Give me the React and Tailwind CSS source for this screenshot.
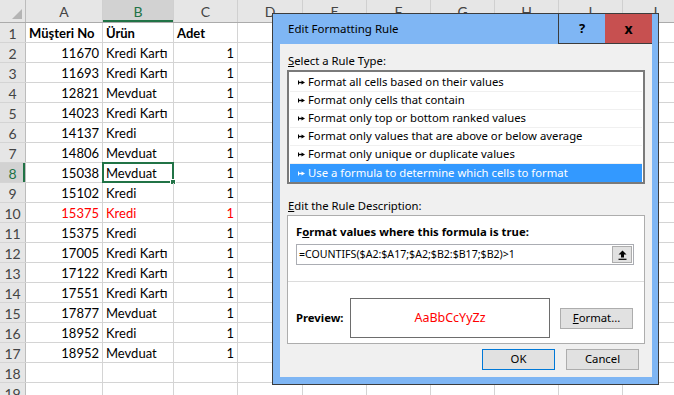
import React from "react";

const colWidths = ["w-[77px]", "w-[71px]", "w-[64px]", "w-[65px]", "w-[64px]", "w-[64px]", "w-[64px]", "w-[64px]", "w-[64px]", "w-[64px]"];
const letters = ["A", "B", "C", "D", "E", "F", "G", "H", "I", "J"];

const data = [
  [11670, "Kredi Kartı", 1],
  [11693, "Kredi Kartı", 1],
  [12821, "Mevduat", 1],
  [14023, "Kredi Kartı", 1],
  [14137, "Kredi", 1],
  [14806, "Mevduat", 1],
  [15038, "Mevduat", 1],
  [15102, "Kredi", 1],
  [15375, "Kredi", 1],
  [15375, "Kredi", 1],
  [17005, "Kredi Kartı", 1],
  [17122, "Kredi Kartı", 1],
  [17551, "Kredi Kartı", 1],
  [17877, "Mevduat", 1],
  [18952, "Kredi", 1],
  [18952, "Mevduat", 1],
];

const ruleTypes = [
  "Format all cells based on their values",
  "Format only cells that contain",
  "Format only top or bottom ranked values",
  "Format only values that are above or below average",
  "Format only unique or duplicate values",
  "Use a formula to determine which cells to format",
];

function RowHeader({ n, selected }) {
  return (
    <div
      className={
        "w-[26px] shrink-0 flex items-center justify-center pt-[2px] border-r border-[#bcbcbc] " +
        (selected
          ? "bg-[#d2d2d2] text-[#217346] shadow-[inset_-2px_0_0_#217346]"
          : "bg-[#e6e6e6] text-[#444]")
      }
    >
      {n}
    </div>
  );
}

function Cell({ width, children, align = "left", bold, red, selected }) {
  return (
    <div
      className={
        width +
        " shrink-0 relative flex items-center pt-[2px] px-[3px] border-r border-[#d4d4d4] whitespace-nowrap " +
        (align === "right" ? "justify-end " : "") +
        (bold ? "font-bold " : "") +
        (red ? "text-[#ff0000]" : "text-black")
      }
    >
      {children}
      {selected && (
        <div className="absolute -left-px -top-px -right-px -bottom-px border-2 border-[#217346]">
          <div className="absolute -right-[4px] -bottom-[4px] w-[6px] h-[6px] bg-[#217346] border border-white" />
        </div>
      )}
    </div>
  );
}

function Sheet() {
  const rows = [["Müşteri No", "Ürün", "Adet"], ...data, null, null];
  return (
    <div className="font-['Lato',sans-serif]">
      <div className="flex h-[23px] border-b border-[#ababab] bg-[#e6e6e6] text-[#444] text-[14px]">
        <div className="w-[26px] shrink-0 border-r border-[#bcbcbc] flex items-end justify-end p-[3px]">
          <svg width="10" height="10" viewBox="0 0 10 10">
            <path d="M10 0 L10 10 L0 10 Z" fill="#b4b4b4" />
          </svg>
        </div>
        {letters.map((l, i) => (
          <div
            key={l}
            className={
              colWidths[i] +
              " shrink-0 flex items-center justify-center pt-[1px] border-r border-[#d0d0d0] " +
              (l === "B" ? "bg-[#d2d2d2] text-[#217346] shadow-[inset_0_-2px_0_#217346]" : "")
            }
          >
            {l}
          </div>
        ))}
      </div>
      {rows.map((r, idx) => {
        const n = idx + 1;
        const red = n === 10;
        return (
          <div key={n} className="flex h-5 border-b border-[#d4d4d4] text-[14px]">
            <RowHeader n={n} selected={n === 8} />
            <div className="flex text-[13px]">
              <Cell width={colWidths[0]} align={n === 1 ? "left" : "right"} bold={n === 1} red={red}>
                {r ? r[0] : ""}
              </Cell>
              <Cell width={colWidths[1]} bold={n === 1} red={red} selected={n === 8}>
                {r ? r[1] : ""}
              </Cell>
              <Cell width={colWidths[2]} align={n === 1 ? "left" : "right"} bold={n === 1} red={red}>
                {r ? r[2] : ""}
              </Cell>
              {colWidths.slice(3).map((w, i) => (
                <Cell key={i} width={w} />
              ))}
            </div>
          </div>
        );
      })}
    </div>
  );
}

function RuleArrow({ white }) {
  const c = white ? "#ffffff" : "#000000";
  return (
    <svg width="7" height="5" viewBox="0 0 7 5" className="shrink-0">
      <path d="M0.5 0.5 V4.5" stroke={c} strokeWidth="1" />
      <path d="M0.5 2.5 H4" stroke={c} strokeWidth="1.4" />
      <path d="M3.5 0.5 L7 2.5 L3.5 4.5 Z" fill={c} />
    </svg>
  );
}

function Button({ children, primary, className = "" }) {
  return (
    <div
      className={
        "w-[73px] h-[21px] flex items-center justify-center bg-[#e1e1e1] border " +
        (primary ? "border-[#0078d7] " : "border-[#adadad] ") +
        className
      }
    >
      {children}
    </div>
  );
}

function Dialog() {
  return (
    <div className="absolute left-[272px] top-[13px] w-[387px] h-[372px] border border-[#3c3c3c] bg-[#7fb6f4] flex flex-col font-['Noto_Sans',sans-serif] text-[11.3px] text-black">
      <div className="flex h-[30px] shrink-0">
        <div className="flex-1 flex items-center pl-[15px] pb-[1px] text-[11.5px]">Edit Formatting Rule</div>
        <div className="flex mr-[6px] border-l border-b border-[#3c3c3c]">
          <div className="w-[46px] flex items-center justify-center font-bold text-[13px]">?</div>
          <div className="w-[47px] flex items-center justify-center bg-[#c75050] font-bold text-[14px]">x</div>
        </div>
      </div>

      <div className="ml-[7px] mr-[6px] h-[333px] shrink-0 bg-[#f0f0f0] flex flex-col">
        <div className="pl-[8px] pt-[9px] h-[25px] leading-4">
          <span className="underline">S</span>elect a Rule Type:
        </div>
        <div className="mx-[7px] mt-px h-[114px] border-2 border-[#7a7a7a] bg-white pt-[2px] px-px">
          {ruleTypes.map((t, i) => {
            const sel = i === ruleTypes.length - 1;
            return (
              <div
                key={t}
                className={
                  "h-[18px] flex items-center gap-[3px] pl-[8px] " +
                  (sel ? "bg-[#3399ff] text-white" : "border-b border-[#f0f0f0]")
                }
              >
                <RuleArrow white={sel} />
                <span>{t}</span>
              </div>
            );
          })}
        </div>

        <div className="pl-[8px] mt-[14px] h-4 leading-4">
          <span className="underline">E</span>dit the Rule Description:
        </div>
        <div className="mx-[7px] mt-px h-[129px] border border-[#adadad] bg-white flex flex-col">
          <div className="pl-[8px] pt-[8px] h-[24px] leading-4 font-bold">
            F<span className="underline">o</span>rmat values where this formula is true:
          </div>
          <div className="ml-[8px] mr-[10px] mt-[4px] h-[21px] border border-[#abadb3] flex items-center pl-[2px] pr-px">
            <span className="flex-1 text-[10.6px]">=COUNTIFS($A2:$A17;$A2;$B2:$B17;$B2)&gt;1</span>
            <div className="w-[20px] h-[17px] bg-[#e1e1e1] border border-[#adadad] flex items-center justify-center">
              <svg width="9" height="10" viewBox="0 0 9 10">
                <path d="M4.5 0.5 L8.5 4.5 H6 V7.5 H3 V4.5 H0.5 Z" fill="#000" />
                <path d="M0.5 9.3 H8.5" stroke="#000" strokeWidth="1.2" />
              </svg>
            </div>
          </div>
          <div className="mt-[16px] h-px bg-[#dcdcdc]" />
          <div className="mt-[16px] flex items-center pl-[8px]">
            <div className="w-[54px] font-bold">Preview:</div>
            <div className="w-[200px] h-[40px] border border-[#6d6d6d] flex items-center justify-center text-[#ff0000] text-[12.5px]">
              AaBbCcYyZz
            </div>
            <Button className="ml-[10px]">
              <span className="underline">F</span>ormat...
            </Button>
          </div>
        </div>

        <div className="mt-[5px] flex justify-end gap-[11px] pr-[13px]">
          <Button primary>OK</Button>
          <Button>Cancel</Button>
        </div>
      </div>
    </div>
  );
}

export default function App() {
  return (
    <div className="relative w-[674px] h-[395px] overflow-hidden bg-white">
      <Sheet />
      <Dialog />
    </div>
  );
}
